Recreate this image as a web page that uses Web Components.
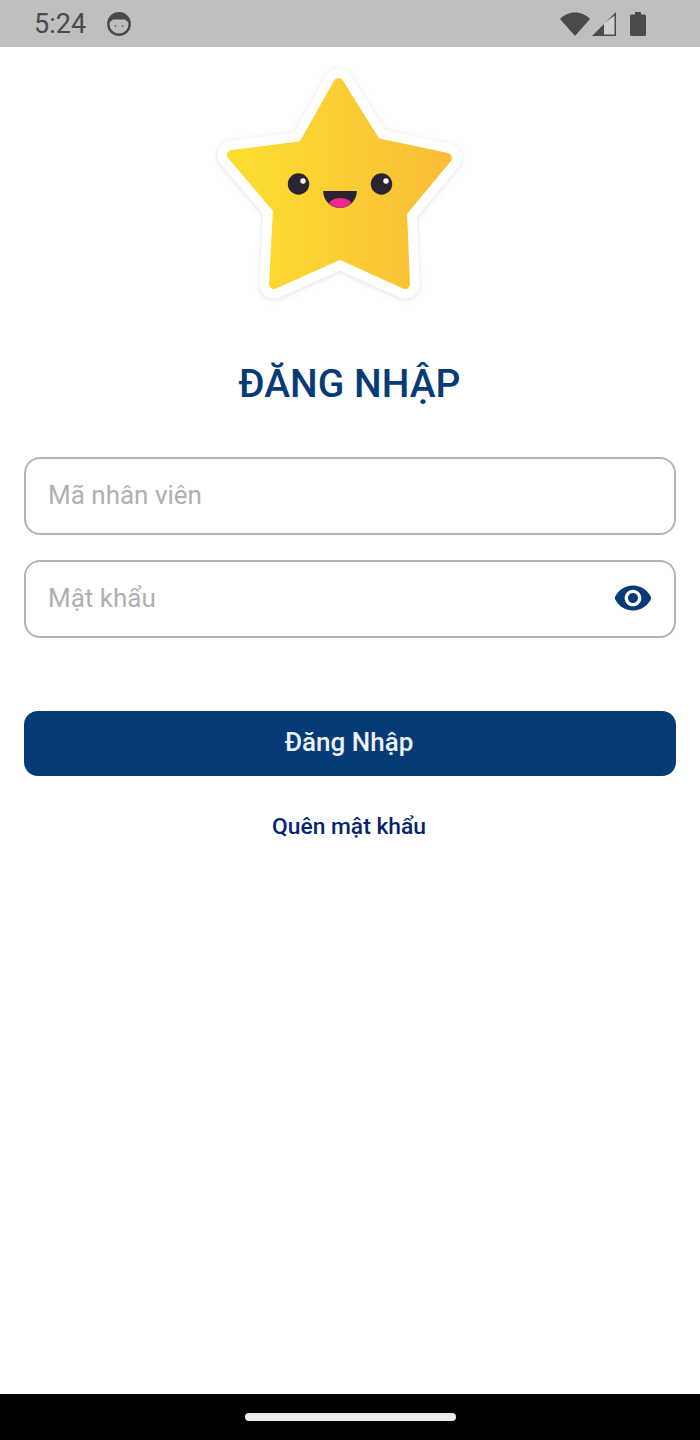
<!DOCTYPE html>
<html lang="vi">
<head>
<meta charset="utf-8">
<title>Đăng Nhập</title>
<style>
  html, body { margin: 0; height: 100%; background: #fff; font-family: Roboto, "Liberation Sans", sans-serif; }
  login-page { display: flex; height: 1440px; }
</style>
</head>
<body>
<login-page></login-page>
<script>
// top system bar: clock, app icon, wifi / signal / battery
class StatusBar extends HTMLElement {
  connectedCallback() {
    const shadow = this.attachShadow({ mode: "open" });
    shadow.innerHTML = `
      <style>
        :host { display: flex; align-items: center; height: 47px; background: #bfbfbf; color: #4a4a4a; padding: 0 54px 0 34px; box-sizing: border-box; flex: none; }
        .time { font-size: 27px; width: 73px; }
        .spacer { flex: 1; }
        svg { display: block; }
        .right { display: flex; align-items: center; }
      </style>
      <span class="time">5:24</span>
      <svg width="24" height="24" viewBox="0 0 24 24">
        <circle cx="12" cy="12" r="10.700" fill="none" stroke="#4a4a4a" stroke-width="2.400"/>
        <path d="M2.500 10.500C3 5 7 1 12 1S21 5 21.500 10.500L18 7.500H6Z" fill="#4a4a4a"/>
        <circle cx="8.500" cy="14" r="1" fill="#6e6e6e"/><circle cx="15.500" cy="14" r="1" fill="#6e6e6e"/>
      </svg>
      <span class="spacer"></span>
      <span class="right">
        <svg width="30" height="24" viewBox="0 0 30 24"><path d="M0 7C4 3 9 .5 15 .5S26 3 30 7L15 24Z" fill="#4a4a4a"/></svg>
        <svg width="24" height="24" viewBox="0 0 24 24" style="margin:0 14px 0 2px"><path d="M0 24 24 0V24Z" fill="#4a4a4a"/><path d="M12 22.500V11.500L22.500 3.500V22.500Z" fill="#cfcfcf"/></svg>
        <svg width="16" height="26" viewBox="0 0 16 26"><path d="M5 1h6v2.500h3.500a1.500 1.500 0 0 1 1.500 1.500v18.500a1.500 1.500 0 0 1-1.500 1.500H1.500A1.500 1.500 0 0 1 0 23.500V5a1.500 1.500 0 0 1 1.500-1.500H5Z" fill="#4a4a4a"/></svg>
      </span>`;
  }
}

// smiling star, coordinates taken straight from the page
class StarLogo extends HTMLElement {
  connectedCallback() {
    const shadow = this.attachShadow({ mode: "open" });
    const pts = "338.500,83 376,143 447,158 402,212 405,284 340,254.500 274,284 278,209 232,155 303,146";
    shadow.innerHTML = `
      <style>
        :host { display: block; width: 280px; height: 255px; flex: none; }
        svg { display: block; }
      </style>
      <svg width="280" height="255" viewBox="200 55 280 255">
        <defs>
          <linearGradient id="g" gradientUnits="userSpaceOnUse" x1="226" y1="0" x2="453" y2="0">
            <stop offset="0" stop-color="#fae02f"/>
            <stop offset="1" stop-color="#fbbc37"/>
          </linearGradient>
          <filter id="s" x="-10%" y="-10%" width="120%" height="120%">
            <feDropShadow dx="0" dy="1" stdDeviation="2.500" flood-color="#8090b0" flood-opacity=".28"/>
          </filter>
        </defs>
        <polygon points="${pts}" fill="#fff" stroke="#fff" stroke-width="29" stroke-linejoin="round" filter="url(#s)"/>
        <polygon points="${pts}" fill="url(#g)" stroke="url(#g)" stroke-width="10" stroke-linejoin="round"/>
        <circle cx="298.500" cy="184" r="10.700" fill="#2d2433"/>
        <circle cx="381.500" cy="184" r="10.700" fill="#2d2433"/>
        <circle cx="303" cy="181" r="2.700" fill="#fff"/>
        <circle cx="386" cy="181" r="2.700" fill="#fff"/>
        <path d="M323 191H357C356.500 201 349 208 340 208S323.500 201 323 191Z" fill="#2d2433"/>
        <path d="M329 203C332 199 336 198 340 198S349 199 351.500 203C348 206.500 344 208 340 208S332 206.500 329 203Z" fill="#ea2a8c"/>
      </svg>`;
  }
}

// <text-field placeholder="..." [eye]></text-field>
class TextField extends HTMLElement {
  connectedCallback() {
    const shadow = this.attachShadow({ mode: "open" });
    const eye = this.hasAttribute("eye");
    shadow.innerHTML = `
      <style>
        :host { display: flex; align-items: center; height: 78px; box-sizing: border-box; border: 2px solid #b4b4b4; border-radius: 16px; padding: 0 21.500px 0 22px; background: #fff; }
        .ph { flex: 1; font-size: 26px; color: #b0b0b0; position: relative; top: -1px; }
        svg { display: block; position: relative; top: -1px; }
      </style>
      <span class="ph">${this.getAttribute("placeholder") || ""}</span>
      ${eye ? `<svg width="40" height="40" viewBox="0 0 24 24"><path fill="#063b78" d="M12 4.500C7 4.500 2.730 7.610 1 12c1.730 4.390 6 7.500 11 7.500s9.270-3.110 11-7.500c-1.730-4.390-6-7.500-11-7.500zM12 17c-2.760 0-5-2.240-5-5s2.240-5 5-5 5 2.240 5 5-2.240 5-5 5zm0-8c-1.660 0-3 1.340-3 3s1.340 3 3 3 3-1.340 3-3-1.340-3-3-3z"/></svg>` : ""}`;
  }
}

class PrimaryButton extends HTMLElement {
  connectedCallback() {
    const shadow = this.attachShadow({ mode: "open" });
    shadow.innerHTML = `
      <style>
        :host { display: flex; align-items: center; justify-content: center; height: 65px; box-sizing: border-box; padding: 0 2px 3px 0; background: #063b78; color: #edf1f6; border-radius: 14px; font-size: 26px; font-weight: 500; }
      </style>
      <slot></slot>`;
  }
}

class NavBar extends HTMLElement {
  connectedCallback() {
    const shadow = this.attachShadow({ mode: "open" });
    shadow.innerHTML = `
      <style>
        :host { display: flex; align-items: center; justify-content: center; height: 46px; background: #000; flex: none; }
        .pill { width: 211px; height: 8px; border-radius: 4px; background: #ececec; }
      </style>
      <div class="pill"></div>`;
  }
}

class LoginPage extends HTMLElement {
  connectedCallback() {
    const shadow = this.attachShadow({ mode: "open" });
    shadow.innerHTML = `
      <style>
        :host { display: flex; flex-direction: column; width: 700px; background: #fff; }
        main { flex: 1; display: flex; flex-direction: column; padding: 8px 24px 0; }
        star-logo { margin-left: 176px; }
        h1 { margin: 51px 0 0; text-align: center; font-size: 39px; line-height: 47px; font-weight: 500; color: #063b78; padding-right: 1px; }
        .fields { display: flex; flex-direction: column; gap: 25px; margin-top: 49px; }
        primary-button { margin-top: 73px; }
        .forgot { margin-top: 36px; text-align: center; font-size: 22.800px; line-height: 30px; font-weight: 500; color: #04256e; padding-right: 2px; }
      </style>
      <status-bar></status-bar>
      <main>
        <star-logo></star-logo>
        <h1>ĐĂNG NHẬP</h1>
        <div class="fields">
          <text-field placeholder="Mã nhân viên"></text-field>
          <text-field placeholder="Mật khẩu" eye></text-field>
        </div>
        <primary-button>Đăng Nhập</primary-button>
        <div class="forgot">Quên mật khẩu</div>
      </main>
      <nav-bar></nav-bar>`;
  }
}

customElements.define("status-bar", StatusBar);
customElements.define("star-logo", StarLogo);
customElements.define("text-field", TextField);
customElements.define("primary-button", PrimaryButton);
customElements.define("nav-bar", NavBar);
customElements.define("login-page", LoginPage);
</script>
</body>
</html>
